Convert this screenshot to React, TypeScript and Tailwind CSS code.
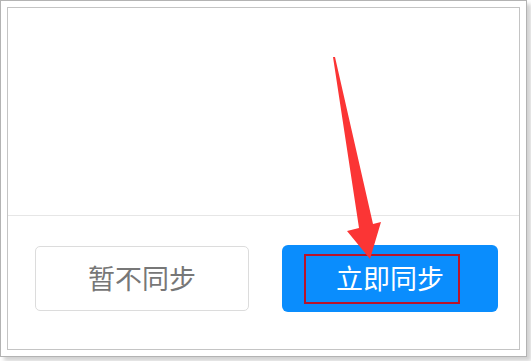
import React from 'react'

const FONT = '"Noto Sans CJK SC", "Noto Sans", sans-serif'

export default function App() {
  return (
    <div className="relative w-[531px] h-[361px] bg-white" style={{ fontFamily: FONT }}>
      {/* Screenshot frame */}
      <div className="w-[527px] h-[357px] border border-[#b3b3b3] bg-white p-[6px] shadow-[4px_4px_4px_rgba(0,0,0,0.18)]">
        <div className="h-full border border-[#c4c4c4] flex flex-col">
          <div className="h-[207px]" />
          <div className="flex-1 border-t border-[#e6e6e6] pt-[30px] pl-[27px] flex gap-[33px]">
            <button
              type="button"
              className="w-[214px] h-[65px] rounded-[5px] border border-[#dcdcdc] bg-white text-[27px] text-[#777777] flex items-center justify-center"
            >
              暂不同步
            </button>
            <button
              type="button"
              className="relative w-[216px] h-[67px] -mt-px rounded-[6px] bg-[#0a8dfd] text-[27px] text-white flex items-center justify-center"
            >
              立即同步
              <span className="absolute left-[22px] top-[9px] w-[156px] h-[50px] border-2 border-[#b8142a]" />
            </button>
          </div>
        </div>
      </div>

      {/* Annotation arrow */}
      <svg className="absolute left-0 top-0 pointer-events-none" width="531" height="361" viewBox="0 0 531 361">
        <polygon
          points="333,57 335,57 373,224 381,222 370,259 347,231 359,228"
          fill="#fb3535"
        />
      </svg>
    </div>
  )
}
